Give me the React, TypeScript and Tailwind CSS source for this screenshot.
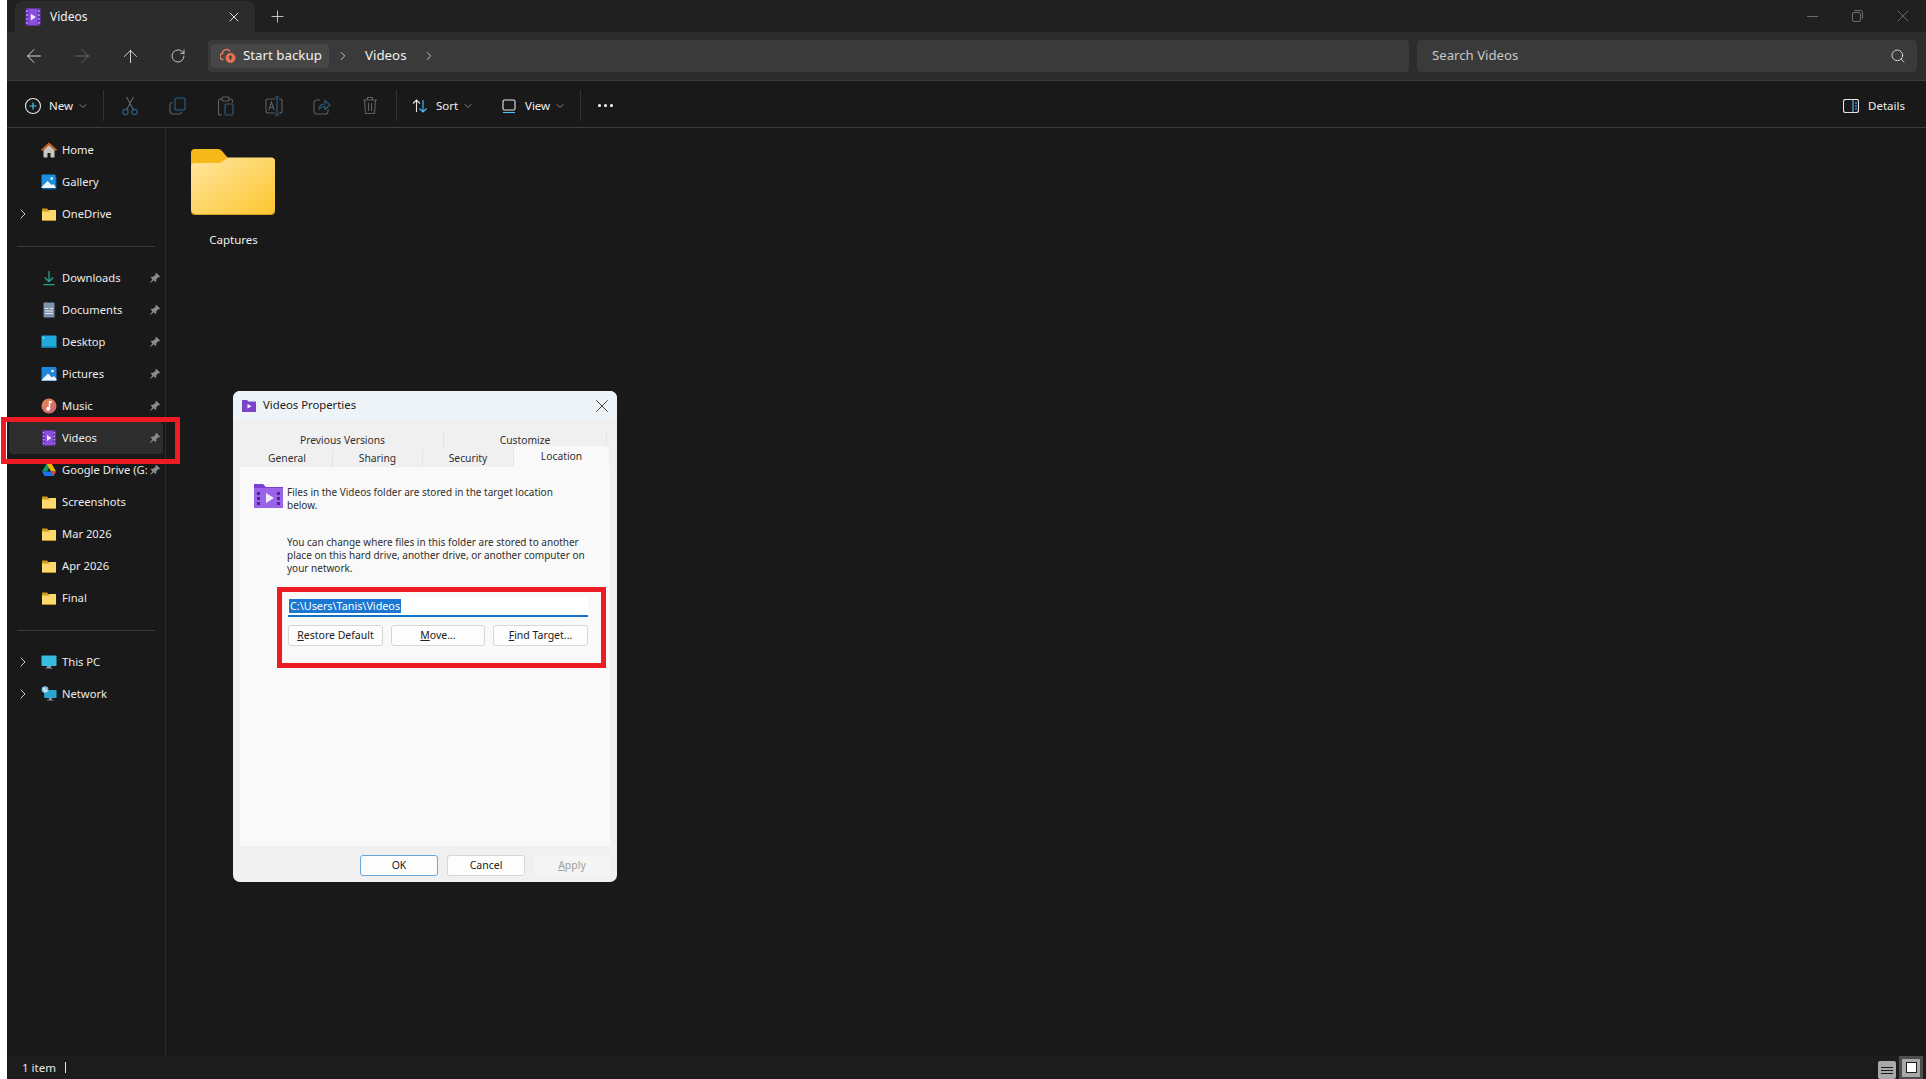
import { ArrowLeft, ArrowRight, ArrowUp, ChevronDown, ChevronRight, Plus, RotateCw, Search, X } from 'lucide-react'
import type { ReactNode } from 'react'

const uiFont = "font-['Noto_Sans','Open_Sans',sans-serif]"

function SmallFolder() {
  return (
    <svg width="16" height="16" viewBox="0 0 16 16">
      <path d="M1 2.500h5l1.500 1.500H15v10.500H1z" fill="#c99a1f" />
      <path d="M1 5.500h6.500L9 4h6v10.500H1z" fill="#fdd86b" />
      <path d="M1 14h14v.6H1z" fill="#b98a1e" />
    </svg>
  )
}

function VideoIcon({ size = 16 }: { size?: number }) {
  return (
    <svg width={size} height={size} viewBox="0 0 16 16">
      <rect x="1.500" y="0.500" width="13" height="15" rx="1" fill="#8a4fe0" />
      <path d="M1.500 0.500h2.500v15H1.500zM12 0.500h2.500v15H12z" fill="#6230b5" />
      <path d="M6 5l4.500 3L6 11z" fill="#f2e9ff" />
      <path d="M2.200 2h1.100v1.500H2.200zM2.200 5.500h1.100V7H2.200zM2.200 9h1.100v1.500H2.200zM2.200 12.500h1.100V14H2.200zM12.700 2h1.100v1.500h-1.100zM12.700 5.500h1.100V7h-1.100zM12.700 9h1.100v1.500h-1.100zM12.700 12.500h1.100V14h-1.100z" fill="#d8c4fb" />
    </svg>
  )
}

function PinIcon() {
  return (
    <svg width="12" height="12" viewBox="0 0 12 12" fill="#8b8b8b">
      <path d="M7.300 0.800l3.900 3.900-0.900 0.500-1 0-1.900 1.900-0.200 2.200-0.900 0.700-1.600-1.700L1.300 11l-0.400-0.300 2.500-3.400-1.700-1.700 0.800-0.800 2.200-0.300 1.900-1.900 0-1z" />
    </svg>
  )
}

function HomeIcon() {
  return (
    <svg width="16" height="16" viewBox="0 0 16 16">
      <path d="M2.500 8L8 3l5.500 5v7.500h-4v-4.500h-3v4.500h-4z" fill="#c9c6c2" />
      <path d="M8 0.500L0 7.800l1 1.200L8 2.800 15 9l1-1.200z" fill="#d9691e" />
    </svg>
  )
}

function PictureIcon() {
  return (
    <svg width="16" height="16" viewBox="0 0 16 16">
      <rect x="0.500" y="1" width="15" height="14" rx="1" fill="#1c86d8" />
      <circle cx="11.500" cy="5" r="1.300" fill="#fff" />
      <path d="M0.500 14l6.500-6.500 4 4 2-1.500 2.500 3v1.500H.5z" fill="#eef6fc" />
    </svg>
  )
}

function DownloadIcon() {
  return (
    <svg width="16" height="16" viewBox="0 0 16 16" fill="none" stroke="#27a586" strokeWidth="1.300">
      <path d="M8 1v10M3.800 7.500L8 11.500l4.200-4M2.500 14.600h11" />
    </svg>
  )
}

function DocumentIcon() {
  return (
    <svg width="16" height="16" viewBox="0 0 16 16">
      <rect x="2.500" y="0.500" width="11" height="15" rx="1" fill="#7d93ad" />
      <path d="M4 6h3.500v1H4zM9 6h3v1H9zM4 8.500h8v1H4zM4 11h8v1H4z" fill="#e4eaf0" />
    </svg>
  )
}

function DesktopIcon() {
  return (
    <svg width="16" height="16" viewBox="0 0 16 16">
      <rect x="0.500" y="1.500" width="15" height="12.500" rx="0.800" fill="#22a9dc" />
      <rect x="0.500" y="12.500" width="15" height="1.500" fill="#1278a8" />
      <rect x="1.800" y="3" width="1" height="1.500" fill="#fff" />
    </svg>
  )
}

function MusicIcon() {
  return (
    <svg width="16" height="16" viewBox="0 0 16 16">
      <defs>
        <linearGradient id="musicGrad" x1="0" y1="0" x2="1" y2="1">
          <stop offset="0" stopColor="#e88a4e" />
          <stop offset="1" stopColor="#c9627d" />
        </linearGradient>
      </defs>
      <circle cx="8" cy="8" r="7.500" fill="url(#musicGrad)" />
      <path d="M7.800 3h3v1.800H9.200v6a2 2 0 1 1-1.400-1.900z" fill="#fff" />
    </svg>
  )
}

function DriveIcon() {
  return (
    <svg width="16" height="16" viewBox="0 0 16 16">
      <path d="M5.500 1.500h5L6 9.500H1z" fill="#0f9d58" />
      <path d="M10.500 1.500L15 9.500h-5L5.500 1.500z" fill="#f4b400" />
      <path d="M1 9.500L3.500 14h9l2.500-4.500H1z" fill="#1a73e8" />
      <path d="M10 9.500h5L12.500 14z" fill="#db4437" />
    </svg>
  )
}

function PcIcon() {
  return (
    <svg width="16" height="16" viewBox="0 0 16 16">
      <rect x="0.500" y="1.500" width="15" height="10.500" rx="0.800" fill="#38bde0" />
      <path d="M6 12h4v1.800H6zM4.500 13.800h7v0.800h-7z" fill="#8a99a6" />
    </svg>
  )
}

function NetworkIcon() {
  return (
    <svg width="18" height="18" viewBox="0 0 18 18">
      <rect x="3.500" y="4.500" width="14" height="9" rx="0.800" fill="#2aa6d0" />
      <path d="M9 13.500h3v2H9zM7 15.500h7v0.800H7z" fill="#8a99a6" />
      <circle cx="4.500" cy="4" r="3.800" fill="#7fc4e8" />
      <path d="M2 2.500h3v2h2v2H4z" fill="#d7ecf7" />
    </svg>
  )
}

function GalleryIcon() {
  return (
    <svg width="16" height="16" viewBox="0 0 16 16">
      <rect x="1.500" y="2.500" width="14" height="13" rx="1" fill="#0f5fa8" />
      <rect x="0.500" y="0.500" width="14" height="13.500" rx="1" fill="#1e8ee0" />
      <circle cx="10.800" cy="4.500" r="1.300" fill="#fff" />
      <path d="M0.500 13l6-6 4 4 1.500-1 2.500 2.500V14H.5z" fill="#eef6fc" />
    </svg>
  )
}

type NavItem = { label: string; icon: ReactNode; chevron?: boolean; pinned?: boolean; selected?: boolean }

const topItems: NavItem[] = [
  { label: 'Home', icon: <HomeIcon /> },
  { label: 'Gallery', icon: <GalleryIcon /> },
  { label: 'OneDrive', icon: <SmallFolder />, chevron: true },
]

const quickItems: NavItem[] = [
  { label: 'Downloads', icon: <DownloadIcon />, pinned: true },
  { label: 'Documents', icon: <DocumentIcon />, pinned: true },
  { label: 'Desktop', icon: <DesktopIcon />, pinned: true },
  { label: 'Pictures', icon: <PictureIcon />, pinned: true },
  { label: 'Music', icon: <MusicIcon />, pinned: true },
  { label: 'Videos', icon: <VideoIcon />, pinned: true, selected: true },
  { label: 'Google Drive (G:)', icon: <DriveIcon />, pinned: true },
  { label: 'Screenshots', icon: <SmallFolder /> },
  { label: 'Mar 2026', icon: <SmallFolder /> },
  { label: 'Apr 2026', icon: <SmallFolder /> },
  { label: 'Final', icon: <SmallFolder /> },
]

const bottomItems: NavItem[] = [
  { label: 'This PC', icon: <PcIcon />, chevron: true },
  { label: 'Network', icon: <NetworkIcon />, chevron: true },
]

function NavRow({ item }: { item: NavItem }) {
  return (
    <div className={`mx-[2px] flex h-8 items-center rounded ${item.selected ? 'bg-[#2d2d2d]' : ''}`}>
      <div className="flex w-8 shrink-0 items-center pl-[6px]">
        {item.chevron && <ChevronRight size={16} strokeWidth={1.500} className="text-[#c8c8c8]" />}
      </div>
      <div className="flex w-4 shrink-0 items-center justify-center">{item.icon}</div>
      <div className="ml-[5px] min-w-0 flex-1 overflow-hidden text-[11.200px] whitespace-nowrap text-[#ececec]">{item.label}</div>
      {item.pinned && (
        <div className="flex w-4 shrink-0 items-center justify-center">
          <PinIcon />
        </div>
      )}
    </div>
  )
}

function Divider() {
  return <div className="mx-[10px] mt-[16px] mb-[15px] h-px bg-[#3a3a3a]" />
}

function CmdSeparator() {
  return <div className="h-[31px] w-px shrink-0 bg-[#333333]" />
}

function CmdIcon({ children }: { children: ReactNode }) {
  return <div className="flex h-8 w-12 shrink-0 items-center justify-center">{children}</div>
}

const muted = { fill: 'none', stroke: '#5f5f5f', strokeWidth: 1.1 }
const mutedBlue = { fill: 'none', stroke: '#2f5f80', strokeWidth: 1.1 }

function DialogTab({ label, width }: { label: string; width: string }) {
  return (
    <div className={`flex items-center justify-center border-r border-[#e4e4e4] bg-[#f0f0f0] pt-[2px] text-[10.300px] text-[#303030] ${width}`}>{label}</div>
  )
}

function DialogButton({ children, width, kind }: { children: ReactNode; width: string; kind?: 'primary' | 'disabled' }) {
  const tone =
    kind === 'primary'
      ? 'border-[#6aa7dc] bg-[#fdfdfd] text-[#222222]'
      : kind === 'disabled'
        ? 'border-[#f2f2f2] bg-[#f5f5f5] text-[#a0a0a0]'
        : 'border-[#d6d6d6] bg-[#fdfdfd] text-[#222222]'
  return (
    <div className={`flex h-[21px] items-center justify-center rounded-[3px] border text-[10.500px] ${tone} ${width}`}>{children}</div>
  )
}

function PropertiesDialog() {
  return (
    <div className={`absolute top-[391px] left-[233px] flex h-[491px] w-[384px] flex-col overflow-hidden rounded-[7px] bg-[#f0f0f0] ${uiFont}`}>
      <div className="flex h-[29px] shrink-0 items-center bg-[#eef3f8] pr-[4px] pl-[9px]">
        <svg width="14" height="12" viewBox="0 0 14 12">
          <path d="M0 0h5l1.500 1.500H14V12H0z" fill="#7a45c8" />
          <path d="M5.500 4l4 2.300-4 2.300z" fill="#fff" />
        </svg>
        <div className="ml-[7px] flex-1 text-[11.300px] text-[#222222]">Videos Properties</div>
        <X size={22} strokeWidth={0.900} className="text-[#222222]" />
      </div>

      <div className="mt-[10px] ml-[9px] flex h-[19px] shrink-0">
        <DialogTab label="Previous Versions" width="w-[202px]" />
        <DialogTab label="Customize" width="w-[163px]" />
      </div>
      <div className="ml-[9px] flex h-[18px] shrink-0">
        <DialogTab label="General" width="w-[91px]" />
        <DialogTab label="Sharing" width="w-[90px]" />
        <DialogTab label="Security" width="w-[91px]" />
        <div className="-mt-[3px] flex h-[21px] w-[95px] items-center justify-center bg-[#f9f9f9] text-[10.300px] text-[#303030]">Location</div>
      </div>

      <div className="mx-[7px] flex flex-1 flex-col bg-[#f9f9f9] pr-[20px] pl-[14px] text-[#303030]">
        <div className="mt-[17px] flex gap-[4px]">
          <svg width="29" height="24" viewBox="0 0 29 24" className="shrink-0">
            <path d="M0 0h9l3 3h17v21H0z" fill="#7a3fd0" />
            <path d="M0 4h29v20H0z" fill="#9a63e8" />
            <path d="M12 9l8 5-8 5z" fill="#f3ecff" />
            <path d="M3 8h3v3H3zM3 13h3v3H3zM3 18h3v3H3zM23 8h3v3h-3zM23 13h3v3h-3zM23 18h3v3h-3z" fill="#52248f" />
          </svg>
          <div className="mt-[2px] w-[270px] text-[10px] leading-[13px]">
            Files in the Videos folder are stored in the target location below.
          </div>
        </div>
        <div className="mt-[24px] ml-[33px] text-[10px] leading-[13px]">
          You can change where files in this folder are stored to another place on this hard drive, another drive, or another computer on your network.
        </div>
        <div className="mt-[22px] ml-[34px] flex h-[20px] w-[300px] items-center border-b-2 border-[#0f74c8] bg-white pl-[1px]">
          <span className="bg-[#1a78d2] px-[1px] text-[10.800px] leading-[14px] text-white">C:\Users\Tanis\Videos</span>
        </div>
        <div className="mt-[8px] ml-[34px] flex w-[300px] gap-[8px]">
          <DialogButton width="w-[95px]">
            <span><u>R</u>estore Default</span>
          </DialogButton>
          <DialogButton width="w-[94px]">
            <span><u>M</u>ove...</span>
          </DialogButton>
          <DialogButton width="w-[95px]">
            <span><u>F</u>ind Target...</span>
          </DialogButton>
        </div>
      </div>

      <div className="flex h-[36px] shrink-0 items-start justify-end gap-[9px] pt-[9px] pr-[7px]">
        <DialogButton width="w-[78px]" kind="primary">OK</DialogButton>
        <DialogButton width="w-[78px]">Cancel</DialogButton>
        <DialogButton width="w-[76px]" kind="disabled">
          <span><u>A</u>pply</span>
        </DialogButton>
      </div>
    </div>
  )
}

export default function App() {
  return (
    <div className={`relative flex h-[1079px] w-[1926px] overflow-hidden bg-white ${uiFont}`}>
      <div className="w-[7px] shrink-0 bg-white" />

      <div className="flex min-w-0 flex-1 flex-col bg-[#191919]">
        {/* Title bar with tab */}
        <div className="flex h-8 shrink-0 items-end bg-[#202020]">
          <div className="ml-[8px] flex h-[31px] w-[240px] items-center rounded-t-lg bg-[#2c2c2c] pr-[13px] pl-[9px]">
            <VideoIcon size={18} />
            <div className="ml-[8px] flex-1 text-[12px] text-[#f0f0f0]">Videos</div>
            <X size={16} strokeWidth={1.400} className="text-[#e8e8e8]" />
          </div>
          <div className="ml-[13px] flex h-[31px] items-center">
            <Plus size={19} strokeWidth={1} className="text-[#e8e8e8]" />
          </div>
          <div className="ml-auto flex h-8 items-center pr-[13px]">
            <div className="h-px w-[11px] bg-[#6a6a6a]" />
            <svg width="11" height="12" viewBox="0 0 11 12" fill="none" stroke="#6f6f6f" strokeWidth="1" className="ml-[34px]">
              <rect x="0.500" y="2.500" width="8" height="9" rx="1.500" />
              <path d="M2.500 0.500h6a2 2 0 0 1 2 2v6" />
            </svg>
            <X size={20} strokeWidth={0.900} className="ml-[30px] text-[#7a7a7a]" />
          </div>
        </div>

        {/* Navigation row */}
        <div className="flex h-[49px] shrink-0 items-center border-b border-[#3b3b3b] bg-[#2c2c2c] pr-[9px] pl-[3px]">
          <div className="flex h-8 w-12 items-center justify-center">
            <ArrowLeft size={22} strokeWidth={1} className="text-[#e8e8e8]" />
          </div>
          <div className="flex h-8 w-12 items-center justify-center">
            <ArrowRight size={22} strokeWidth={1} className="text-[#6e6e6e]" />
          </div>
          <div className="flex h-8 w-12 items-center justify-center">
            <ArrowUp size={21} strokeWidth={1} className="text-[#e8e8e8]" />
          </div>
          <div className="flex h-8 w-12 items-center justify-center">
            <RotateCw size={16} strokeWidth={1.200} className="text-[#e8e8e8]" />
          </div>
          <div className="ml-[6px] flex h-8 flex-1 items-center rounded bg-[#3a3a3a] pl-[3px] text-[13.300px] text-[#f0f0f0]">
            <div className="flex h-6 w-[118px] items-center rounded bg-[#464646] pl-[9px]">
              <svg width="17" height="16" viewBox="0 0 17 16" className="shrink-0">
                <path d="M10 3.500a4 4 0 0 0-7.500 2A3 3 0 0 0 3.500 11.500" fill="none" stroke="#e8815f" strokeWidth="1.400" />
                <circle cx="10.500" cy="10" r="5" fill="#e8704f" />
                <path d="M10.500 7l2 2.500h-1.300V12H9.800V9.500H8.500z" fill="#3a3a3a" />
              </svg>
              <span className="ml-[6px] whitespace-nowrap">Start backup</span>
            </div>
            <ChevronRight size={14} strokeWidth={1.400} className="ml-[7px] text-[#e0e0e0]" />
            <span className="ml-[15px]">Videos</span>
            <ChevronRight size={14} strokeWidth={1.400} className="ml-[15px] text-[#e0e0e0]" />
          </div>
          <div className="ml-[8px] flex h-8 w-[500px] items-center justify-between rounded bg-[#3a3a3a] pr-[11px] pl-[15px] text-[13.200px] text-[#c8c8c8]">
            <span>Search Videos</span>
            <Search size={16} strokeWidth={1.300} className="text-[#e8e8e8]" />
          </div>
        </div>

        {/* Command bar */}
        <div className="flex h-[47px] shrink-0 items-center border-b border-[#3b3b3b] bg-[#191919] pt-[3px] pr-[21px] text-[11.500px] text-[#f0f0f0]">
          <div className="flex w-[96px] items-center pl-[17px]">
            <svg width="18" height="18" viewBox="0 0 18 18" fill="none" className="shrink-0">
              <circle cx="9" cy="9" r="7.500" stroke="#e6e6e6" strokeWidth="1.100" />
              <path d="M9 5.500v7M5.500 9h7" stroke="#4cc2ff" strokeWidth="1.200" />
            </svg>
            <span className="ml-[7px]">New</span>
            <ChevronDown size={12} strokeWidth={1.300} className="ml-[4px] text-[#c0c0c0]" />
          </div>
          <CmdSeparator />
          <div className="ml-[2px] flex">
            <CmdIcon>
              <svg width="18" height="20" viewBox="0 0 18 20" {...mutedBlue}>
                <circle cx="4.500" cy="16" r="2.600" />
                <circle cx="13.500" cy="16" r="2.600" />
                <path d="M5.500 13.800L12.500 1M12.500 13.800L5.500 1" stroke="#5f6a72" />
              </svg>
            </CmdIcon>
            <CmdIcon>
              <svg width="18" height="18" viewBox="0 0 18 18" {...muted}>
                <path d="M3.500 5.500a2.500 2.500 0 0 0-2.500 2.500v6a3 3 0 0 0 3 3h6a2.500 2.500 0 0 0 2.500-2.500" />
                <rect x="6" y="1" width="10" height="12" rx="2" stroke="#2f5f80" />
              </svg>
            </CmdIcon>
            <CmdIcon>
              <svg width="18" height="20" viewBox="0 0 18 20" {...muted}>
                <path d="M5 3H3.500A2 2 0 0 0 1.500 5v12a2 2 0 0 0 2 2H5M12 3h1.500a2 2 0 0 1 2 2v2" />
                <rect x="5" y="1" width="7" height="4" rx="1" />
                <rect x="8" y="8" width="8" height="11" rx="1.500" stroke="#2f5f80" />
              </svg>
            </CmdIcon>
            <CmdIcon>
              <svg width="18" height="20" viewBox="0 0 18 20" {...muted}>
                <path d="M10 3H3a2 2 0 0 0-2 2v10a2 2 0 0 0 2 2h7M14 3h1a2 2 0 0 1 2 2v10a2 2 0 0 1-2 2h-1" />
                <path d="M10 1h4M12 1v18M10 19h4" stroke="#2f5f80" />
                <path d="M4 14l2.500-8 2.500 8M5 11.500h3" />
              </svg>
            </CmdIcon>
            <CmdIcon>
              <svg width="18" height="18" viewBox="0 0 18 18" {...muted}>
                <path d="M7 3H3.500A2.500 2.500 0 0 0 1 5.500v9A2.500 2.500 0 0 0 3.500 17h9a2.500 2.500 0 0 0 2.500-2.500V12" />
                <path d="M6 12c.5-3 3-5 6-5V3.500l5 4.500-5 4.500V9.500c-2.500 0-4.500 1-6 2.500z" stroke="#2f5f80" />
              </svg>
            </CmdIcon>
            <CmdIcon>
              <svg width="16" height="19" viewBox="0 0 16 19" {...muted}>
                <path d="M1 4h14M5.500 4V1.500h5V4M2.500 4l1 13.500h9l1-13.500M6.500 7v8M9.500 7v8" />
              </svg>
            </CmdIcon>
          </div>
          <div className="ml-[2px]">
            <CmdSeparator />
          </div>
          <div className="flex w-[92px] items-center pl-[15px]">
            <svg width="16" height="16" viewBox="0 0 16 16" fill="none" strokeWidth="1.100" className="shrink-0">
              <path d="M4.500 14V2M1 5.500L4.500 2 8 5.500" stroke="#e6e6e6" />
              <path d="M11 2v12M7.500 10.500L11 14l3.500-3.500" stroke="#4cc2ff" />
            </svg>
            <span className="ml-[8px]">Sort</span>
            <ChevronDown size={12} strokeWidth={1.300} className="ml-[4px] text-[#c0c0c0]" />
          </div>
          <div className="flex w-[91px] items-center pl-[12px]">
            <svg width="16" height="16" viewBox="0 0 16 16" fill="none" strokeWidth="1.100" className="shrink-0">
              <rect x="2" y="2" width="12" height="10" rx="1.500" stroke="#e6e6e6" />
              <path d="M2 14.500h12" stroke="#4cc2ff" />
            </svg>
            <span className="ml-[8px]">View</span>
            <ChevronDown size={12} strokeWidth={1.300} className="ml-[4px] text-[#c0c0c0]" />
          </div>
          <CmdSeparator />
          <div className="ml-[17px] flex gap-[3px]">
            <div className="h-[3px] w-[3px] rounded-full bg-white" />
            <div className="h-[3px] w-[3px] rounded-full bg-white" />
            <div className="h-[3px] w-[3px] rounded-full bg-white" />
          </div>
          <div className="ml-auto flex items-center">
            <svg width="16" height="14" viewBox="0 0 16 14" fill="none" strokeWidth="1.100">
              <rect x="0.500" y="0.500" width="15" height="13" rx="2" stroke="#e6e6e6" />
              <path d="M10 0.500v13M12 4h2M12 7h2M12 10h2" stroke="#4cc2ff" />
            </svg>
            <span className="ml-[9px]">Details</span>
          </div>
        </div>

        {/* Sidebar and file area */}
        <div className="flex min-h-0 flex-1">
          <div className="w-[159px] shrink-0 border-r border-[#2b2b2b] pt-[6px]">
            {topItems.map((item) => (
              <NavRow key={item.label} item={item} />
            ))}
            <Divider />
            {quickItems.map((item) => (
              <NavRow key={item.label} item={item} />
            ))}
            <Divider />
            {bottomItems.map((item) => (
              <NavRow key={item.label} item={item} />
            ))}
          </div>
          <div className="flex-1 pt-[20px] pl-[25px]">
            <div className="flex w-[84px] flex-col items-center">
              <svg width="84" height="67" viewBox="0 0 84 67">
                <defs>
                  <linearGradient id="folderFront" x1="0" y1="0" x2="1" y2="1">
                    <stop offset="0" stopColor="#ffe6a0" />
                    <stop offset="1" stopColor="#fdc62f" />
                  </linearGradient>
                </defs>
                <path d="M0 5a4 4 0 0 1 4-4h23a5 5 0 0 1 4 2l6 7h43a4 4 0 0 1 4 4v20H0z" fill="#f6b91a" />
                <path d="M0 19a4 4 0 0 1 4-4h25l8-5.500h43a4 4 0 0 1 4 4V62a4 4 0 0 1-4 4H4a4 4 0 0 1-4-4z" fill="url(#folderFront)" />
                <path d="M0 62a4 4 0 0 0 4 4h76a4 4 0 0 0 4-4v1a4 4 0 0 1-4 4H4a4 4 0 0 1-4-4z" fill="#dca32a" />
              </svg>
              <div className="mt-[16px] ml-[1px] text-[11.500px] text-[#f0f0f0]">Captures</div>
            </div>
          </div>
        </div>

        {/* Status bar */}
        <div className="flex h-[23px] shrink-0 items-center bg-[#1c1c1c] pl-[15px] text-[11.500px] text-[#e8e8e8]">
          <span>1 item</span>
          <div className="ml-[9px] h-[11px] w-px bg-[#e8e8e8]" />
          <div className="mr-[3px] ml-auto flex items-end gap-[3px]">
            <div className="flex h-[18px] w-[18px] flex-col items-center justify-center gap-[2px] rounded-[2px] bg-[#a8a8a8]">
              <div className="h-px w-[12px] bg-[#1c1c1c]" />
              <div className="h-px w-[12px] bg-[#1c1c1c]" />
              <div className="h-px w-[12px] bg-[#1c1c1c]" />
            </div>
            <div className="flex h-[23px] w-[24px] items-center justify-center bg-[#4d4d4d]">
              <div className="flex h-[18px] w-[18px] items-center justify-center bg-[#a8a8a8]">
                <div className="h-[11px] w-[11px] border border-[#1c1c1c] bg-white" />
              </div>
            </div>
          </div>
        </div>
      </div>

      <PropertiesDialog />

      {/* Red callout boxes */}
      <div className="absolute top-[417px] left-[1px] h-[47px] w-[179px] border-[5px] border-[#ed1c24]" />
      <div className="absolute top-[587px] left-[277px] h-[81px] w-[329px] border-[5px] border-[#ed1c24]" />
    </div>
  )
}
